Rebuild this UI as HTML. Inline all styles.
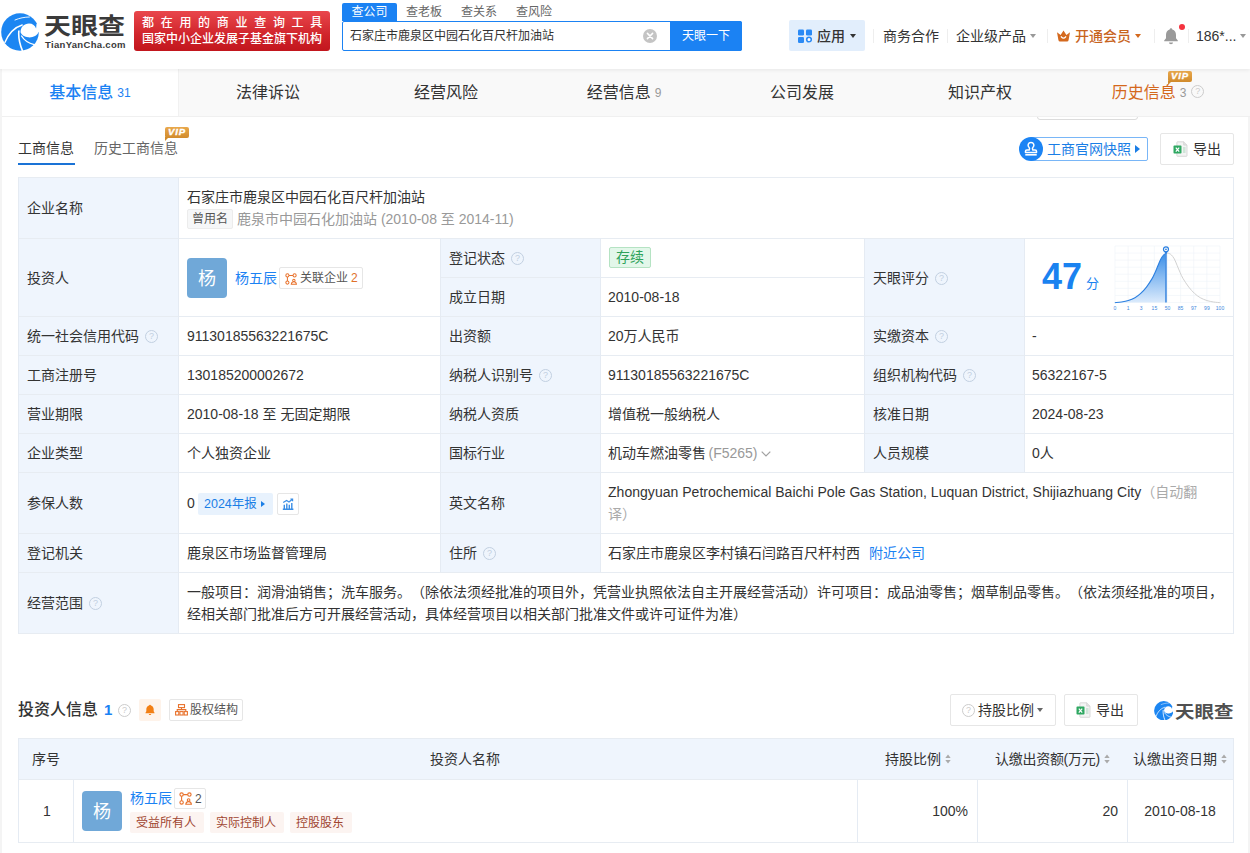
<!DOCTYPE html>
<html lang="zh-CN">
<head>
<meta charset="utf-8">
<title>石家庄市鹿泉区中园石化百尺杆加油站 - 天眼查</title>
<style>
*{box-sizing:border-box;margin:0;padding:0}
html,body{width:1250px;height:853px;overflow:hidden;background:#fff}
body{text-spacing-trim:space-all;font-family:"Liberation Sans","Noto Sans CJK SC",sans-serif;font-size:14px;color:#333;position:relative}
.abs{position:absolute;white-space:nowrap}
a{color:#1b82f3;text-decoration:none}
/* header */
#hdr{position:absolute;left:0;top:0;width:1250px;height:69px;background:#fff;z-index:5;box-shadow:0 1px 4px rgba(0,0,0,.08)}
#pagebg{position:absolute;left:0;top:69px;width:1250px;height:784px;background:#f4f4f4}
#card{position:absolute;left:2px;top:69px;width:1246px;height:784px;background:#fff}
/* nav tabs */
#nav{z-index:2;position:absolute;left:0;top:0;width:1248px;height:48px;background:#f9f9f9;border-bottom:1px solid #f0f0f0}
#nav .t{position:absolute;top:0;height:47px;width:178px;text-align:center;line-height:48px;font-size:16px;color:#333}
#nav .t.on{border-right:1px solid #f1f1f1;background:#fff;color:#1b82f3;font-weight:500}
#nav .t small{font-size:12px;color:#999;font-weight:400;margin-left:4px;position:relative;top:-1px}
#nav .t.on small{color:#1b82f3}

/* header pieces */
#logo-t{left:44px;top:5px;font-size:27px;font-weight:700;color:#3a3a3a;line-height:38px;letter-spacing:0;transform:scaleY(.86);transform-origin:0 100%}
#logo-s{left:45px;top:39px;font-size:9.5px;font-weight:700;color:#3a3a3a;line-height:12px;letter-spacing:.32px}
#banner{font-weight:500;position:absolute;left:134px;top:11px;width:196px;height:40px;border-radius:3px;background:linear-gradient(#e9474c,#d0242b 60%,#c2161d);color:#fff;font-size:12px}
#banner div{position:absolute;left:8px;white-space:nowrap;line-height:16px}
.stab{position:absolute;top:3px;height:18px;line-height:18px;font-size:12px;color:#666;white-space:nowrap}
#sbox{position:absolute;left:342px;top:21px;width:400px;height:30px;border:1px solid #1b82f3;border-radius:2px;background:#fff}
#sbtn{position:absolute;left:670px;top:21px;width:72px;height:30px;background:#1b82f3;color:#fff;font-size:12px;line-height:30px;text-align:center;border-radius:0 2px 2px 0}
.hsep{position:absolute;top:29px;width:1px;height:14px;background:#eeeeee}
.hitem{position:absolute;top:25px;line-height:22px;font-size:14px;color:#333;white-space:nowrap}
.caret{position:absolute;width:0;height:0;border-left:3.5px solid transparent;border-right:3.5px solid transparent;border-top:4px solid #999}

/* sub tabs + buttons */
.q{display:inline-block;width:13px;height:13px;border:1.200px solid #c2d0e1;border-radius:50%;color:#c2d0e1;font-size:9px;line-height:10.500px;text-align:center;vertical-align:middle;margin-left:6px;position:relative;top:-1px;font-family:"Liberation Sans",sans-serif}
.vip{z-index:3;position:absolute;width:24px;height:11px;border-radius:2px;background:linear-gradient(#e9a84c,#d18b2c);color:#fff;font-size:9.500px;font-weight:700;font-style:italic;line-height:10.500px;text-align:center;font-family:"Liberation Sans",sans-serif;letter-spacing:.9px;text-indent:0;-webkit-text-stroke:.35px #fff}
.vip:after{content:"";position:absolute;left:0;top:10px;border-top:4px solid #d18b2c;border-right:4px solid transparent}
.btn{position:absolute;border:1px solid #e6e6e6;border-radius:2px;background:#fff;white-space:nowrap}
/* table 1 */
.lb{position:absolute;background:#eff5fd}
.hl{position:absolute;height:1px;background:#e7ecf2}
.vl{position:absolute;width:1px;background:#e5ebf3}
.c{position:absolute;white-space:nowrap;line-height:20px;font-size:14px;color:#333}
.g{color:#999}
.blue{color:#1b82f3}
.tag{position:absolute;border:1px solid #e6e6e6;border-radius:2px;background:#fff;font-size:12px;line-height:20.500px;height:21px;color:#555;white-space:nowrap}
.ava{position:absolute;width:40px;height:40px;border-radius:4px;background:#70a8d8;color:#fff;font-size:18px;line-height:42px;text-align:center;overflow:hidden}
.rt{position:absolute;height:21px;line-height:22.500px;font-size:12px;color:#a04530;background:#fcf4f1;border-radius:2px;padding:0 6px;white-space:nowrap}
</style>
</head>
<body>
<svg width="0" height="0" style="position:absolute"><defs><g id="xls"><path d="M4.500.8h6.200l3.300 3.300v10.600a.6.600 0 0 1-.6.600H4.500a.6.600 0 0 1-.6-.6V1.400a.6.600 0 0 1 .6-.6z" fill="#f4f4f4" stroke="#cfcfcf" stroke-width=".8"/><path d="M10.700.8v3.300h3.300" fill="#e4e4e4" stroke="#cfcfcf" stroke-width=".7"/><path d="M10 7h2.500M10 9h2.500M10 11h2.500" stroke="#9fd3b4" stroke-width=".9"/><rect x=".5" y="4.600" width="8" height="8" rx=".8" fill="#2fa862"/><path d="M2.800 6.600l3.400 4M6.200 6.600l-3.400 4" stroke="#fff" stroke-width="1.200"/></g><g id="tyc">
    <circle cx="19" cy="19" r="18.8" fill="#1c86f2"/>
    <path d="M19.6 19.6 C19.2 14 23.3 10.4 28 10.4 C31.6 10.4 34.2 12.4 35.1 15.4 L35.5 11 L38 11 L38 19.2 L37.6 19 C36.2 22.8 31.6 24.8 27.2 24.3 C23.6 23.9 20.6 22.3 19.6 19.6Z" fill="#fff"/>
    <path d="M3.9 29.6 C7.6 20.6 12.6 14.6 21.2 12" stroke="#fff" stroke-width="1.4" fill="none" stroke-linecap="round"/>
    <path d="M17.9 17.5 C17.2 24 18.6 31 21.6 38" stroke="#fff" stroke-width="1.6" fill="none"/>
    <path d="M20.6 23 C23.2 27.4 27.6 30.2 33.2 31.6" stroke="#fff" stroke-width="1.4" fill="none" stroke-linecap="round"/>
    <path d="M14 7 C18.6 5 23.4 4.1 28.4 4" stroke="#fff" stroke-width=".9" fill="none" stroke-linecap="round"/>
  </g><g id="rel" fill="none" stroke="#e8722c" stroke-width="1.100"><circle cx="2.600" cy="2.600" r="1.700"/><circle cx="10.400" cy="2.600" r="1.700"/><circle cx="2.600" cy="10.400" r="1.700"/><path d="M4.300 2.600h4.400M2.600 4.300v4.400"/><circle cx="9.600" cy="8" r="1.300"/><path d="M6.800 12.200c.3-2 1.400-2.600 2.800-2.600s2.500.6 2.800 2.600z"/></g></defs></svg>
<div id="pagebg"></div>
<div id="card">
  <div id="nav">
    <div class="t on" style="left:0;width:177px">基本信息<small>31</small></div>
    <div class="t" style="left:177px">法律诉讼</div>
    <div class="t" style="left:355px">经营风险</div>
    <div class="t" style="left:533px">经营信息<small>9</small></div>
    <div class="t" style="left:711px">公司发展</div>
    <div class="t" style="left:889px">知识产权</div>
    <div class="t" style="left:1067px;color:#d4681c">历史信息<small>3</small><span class="q" style="margin-left:5px;border-color:#ccc;color:#ccc;top:-2px">?</span></div>
  </div>

  <!-- hidden fragment under nav -->
  <div class="abs" style="left:1035px;top:40px;width:101px;height:11px;border:1px solid #dcdcdc;border-radius:0 0 3px 3px;background:#fff"></div>
  <div class="vip" style="left:1166px;top:2px">VIP</div>
  <!-- sub tabs -->
  <div class="c" style="left:16px;top:69px;color:#333">工商信息</div>
  <div class="abs" style="left:16px;top:94px;width:57px;height:2px;background:#1a73d6"></div>
  <div class="c" style="left:92px;top:69px;color:#666">历史工商信息</div>
  <div class="vip" style="left:163px;top:58px">VIP</div>
  <!-- buttons -->
  <div class="btn" style="left:1028px;top:68px;width:118px;height:24px;border-color:#79b6f7"></div>
  <svg class="abs" style="left:1017px;top:68px" width="24" height="24" viewBox="0 0 24 24"><circle cx="12" cy="12" r="12" fill="#1c84f4"/><path d="M12 5.400a2.900 2.900 0 0 1 1.900 5.100c-.5.500-.6 1-.4 1.600l.3.900h2.400c.8 0 1.300.5 1.300 1.200v1.300H6.500v-1.300c0-.7.500-1.200 1.300-1.200h2.400l.3-.9c.2-.6.100-1.100-.4-1.600A2.900 2.900 0 0 1 12 5.400z" fill="none" stroke="#fff" stroke-width="1.500" stroke-linejoin="round"/><path d="M6.300 17.800h11.400" stroke="#fff" stroke-width="1.600"/></svg>
  <div class="c" style="left:1045px;top:70px;color:#1a7ee6">工商官网快照</div>
  <div class="abs" style="left:1133px;top:76px;width:0;height:0;border-top:4px solid transparent;border-bottom:4px solid transparent;border-left:5px solid #1a7ee6"></div>
  <div class="btn" style="left:1158px;top:64px;width:74px;height:32px"></div>
  <svg class="abs" style="left:1171px;top:72px" width="15" height="16" viewBox="0 0 15 16"><use href="#xls"/></svg>
  <div class="c" style="left:1191px;top:70px">导出</div>

<!--T1-->
<div class="lb" style="left:16px;top:108px;width:160px;height:456px"></div>
<div class="lb" style="left:438px;top:169px;width:160px;height:334px"></div>
<div class="lb" style="left:862px;top:169px;width:160px;height:234px"></div>
<div class="hl" style="left:16px;top:108px;width:1216px"></div>
<div class="hl" style="left:16px;top:169px;width:1216px"></div>
<div class="hl" style="left:16px;top:247px;width:1216px"></div>
<div class="hl" style="left:16px;top:286px;width:1216px"></div>
<div class="hl" style="left:16px;top:325px;width:1216px"></div>
<div class="hl" style="left:16px;top:364px;width:1216px"></div>
<div class="hl" style="left:16px;top:403px;width:1216px"></div>
<div class="hl" style="left:16px;top:464px;width:1216px"></div>
<div class="hl" style="left:16px;top:503px;width:1216px"></div>
<div class="hl" style="left:16px;top:564px;width:1216px"></div>
<div class="hl" style="left:438px;top:208px;width:424px"></div>
<div class="vl" style="left:16px;top:108px;height:457px"></div>
<div class="vl" style="left:1231px;top:108px;height:457px"></div>
<div class="vl" style="left:176px;top:108px;height:456px"></div>
<div class="vl" style="left:438px;top:169px;height:334px"></div>
<div class="vl" style="left:598px;top:169px;height:334px"></div>
<div class="vl" style="left:862px;top:169px;height:234px"></div>
<div class="vl" style="left:1022px;top:169px;height:234px"></div>
<div class="c " style="left:25px;top:129px;">企业名称</div>
<div class="c " style="left:25px;top:199px;">投资人</div>
<div class="c " style="left:25px;top:257px;">统一社会信用代码<span class="q">?</span></div>
<div class="c " style="left:25px;top:296px;">工商注册号</div>
<div class="c " style="left:25px;top:335px;">营业期限</div>
<div class="c " style="left:25px;top:374px;">企业类型</div>
<div class="c " style="left:25px;top:424px;">参保人数</div>
<div class="c " style="left:25px;top:474px;">登记机关</div>
<div class="c " style="left:25px;top:524px;">经营范围<span class="q">?</span></div>
<div class="c " style="left:447px;top:179px;">登记状态<span class="q">?</span></div>
<div class="c " style="left:447px;top:218px;">成立日期</div>
<div class="c " style="left:447px;top:257px;">出资额</div>
<div class="c " style="left:447px;top:296px;">纳税人识别号<span class="q">?</span></div>
<div class="c " style="left:447px;top:335px;">纳税人资质</div>
<div class="c " style="left:447px;top:374px;">国标行业</div>
<div class="c " style="left:447px;top:424px;">英文名称</div>
<div class="c " style="left:447px;top:474px;">住所<span class="q">?</span></div>
<div class="c " style="left:871px;top:199px;">天眼评分<span class="q">?</span></div>
<div class="c " style="left:871px;top:257px;">实缴资本<span class="q">?</span></div>
<div class="c " style="left:871px;top:296px;">组织机构代码<span class="q">?</span></div>
<div class="c " style="left:871px;top:335px;">核准日期</div>
<div class="c " style="left:871px;top:374px;">人员规模</div>
<div class="c " style="left:185px;top:118px;">石家庄市鹿泉区中园石化百尺杆加油站</div>
<div class="tag" style="left:185px;top:140px;width:46px;height:20px;line-height:18px;text-align:center;background:#f6f7f8;border-color:#ececec;color:#555">曾用名</div>
<div class="c g" style="left:235px;top:140px;">鹿泉市中园石化加油站 (2010-08 至 2014-11)</div>
<div class="ava" style="left:185px;top:189px">杨</div>
<div class="c blue" style="left:233px;top:199px;">杨五辰</div>
<div class="tag" style="left:277px;top:198px;width:84px;height:22px;line-height:20.500px"><svg class="abs" style="left:5px;top:5px" width="12" height="12" viewBox="0 0 13 13"><use href="#rel"/></svg><span style="position:absolute;left:20px">关联企业</span><span style="position:absolute;left:71px;color:#e0702a">2</span></div>
<div class="c " style="left:185px;top:257px;">91130185563221675C</div>
<div class="c " style="left:185px;top:296px;">130185200002672</div>
<div class="c " style="left:185px;top:335px;">2010-08-18 至 无固定期限</div>
<div class="c " style="left:185px;top:374px;">个人独资企业</div>
<div class="c " style="left:185px;top:424px;">0</div>
<div class="abs" style="left:196px;top:424px;width:75px;height:22px;border-radius:2px;background:#e8f2fd;color:#1a7ee6;font-size:12.500px;line-height:22px;padding-left:6px">2024年报<i style="position:absolute;left:63px;top:8px;border-top:3.500px solid transparent;border-bottom:3.500px solid transparent;border-left:4px solid #1a7ee6"></i></div>
<div class="tag" style="left:275px;top:424px;width:22px;height:22px"><svg class="abs" style="left:4px;top:4px" width="12" height="12" viewBox="0 0 12 12"><path d="M.8 11.300h10.600M2.300 11V6.800M4.800 11V5.600M7.300 11V6.800M9.800 11V5" stroke="#3a8ee6" stroke-width="1.400" fill="none"/><path d="M1.200 4.600L4.600 2.400l2.400 1.600L10.400 1.200M8.400 1h2.200v2.200" stroke="#3a8ee6" stroke-width="1.200" fill="none"/></svg></div>
<div class="c " style="left:185px;top:474px;">鹿泉区市场监督管理局</div>
<div class="abs" style="left:607px;top:178px;width:42px;height:21px;border:1px solid #b5e3c3;border-radius:2px;background:#e3f7ea;color:#2fa35b;font-size:14px;line-height:19px;text-align:center">存续</div>
<div class="c " style="left:606px;top:218px;">2010-08-18</div>
<div class="c " style="left:606px;top:257px;">20万人民币</div>
<div class="c " style="left:606px;top:296px;">91130185563221675C</div>
<div class="c " style="left:606px;top:335px;">增值税一般纳税人</div>
<div class="c " style="left:606px;top:374px;">机动车燃油零售<span class="g" style="margin-left:2.500px">(F5265)</span><svg style="margin-left:3.500px;vertical-align:1px" width="10" height="6" viewBox="0 0 10 6"><path d="M.7.700L5 5 9.300.7" stroke="#a0a0a0" stroke-width="1.200" fill="none"/></svg></div>
<div class="c " style="left:606px;top:413px;"><span style="letter-spacing:.03px">Zhongyuan Petrochemical Baichi Pole Gas Station, Luquan District, Shijiazhuang City</span><span style="color:#aaa">（自动翻</span></div>
<div class="c " style="left:606px;top:435px;"><span style="color:#aaa">译）</span></div>
<div class="c " style="left:606px;top:474px;">石家庄市鹿泉区李村镇石闫路百尺杆村西<span class="blue" style="margin-left:9px">附近公司</span></div>
<div class="c " style="left:1030px;top:257px;">-</div>
<div class="c " style="left:1030px;top:296px;">56322167-5</div>
<div class="c " style="left:1030px;top:335px;">2024-08-23</div>
<div class="c " style="left:1030px;top:374px;">0人</div>
<div class="c " style="left:185px;top:513px;">一般项目：润滑油销售；洗车服务。（除依法须经批准的项目外，凭营业执照依法自主开展经营活动）许可项目：成品油零售；烟草制品零售。（依法须经批准的项目，</div>
<div class="c " style="left:185px;top:535px;">经相关部门批准后方可开展经营活动，具体经营项目以相关部门批准文件或许可证件为准）</div>
<div class="abs" style="left:1040px;top:188px;font-size:36px;font-weight:700;color:#1a82f0;line-height:40px;font-family:'Liberation Sans',sans-serif">47</div>
<div class="abs" style="left:1084px;top:206px;font-size:13px;color:#1a82f0;line-height:18px">分</div>

<!--/T1-->
<!--T2-->
<svg class="abs" style="left:1108px;top:171px" width="130" height="76" viewBox="0 0 130 76"><defs><linearGradient id="cg" x1="0" y1="0" x2="0" y2="1"><stop offset="0" stop-color="#3b8fe8"/><stop offset="1" stop-color="#dcebfc"/></linearGradient></defs><path d="M5.00 6V62.5M18.12 6V62.5M31.25 6V62.5M44.38 6V62.5M57.50 6V62.5M70.62 6V62.5M83.75 6V62.5M96.88 6V62.5M110.00 6V62.5M5 6.00H110M5 13.06H110M5 20.12H110M5 27.19H110M5 34.25H110M5 41.31H110M5 48.38H110M5 55.44H110M5 62.50H110" stroke="#eff3f9" stroke-width=".6" fill="none"/><path d="M4.80 62.69 C5.92 62.57 9.28 62.37 11.52 62.01 C13.76 61.66 16.00 61.29 18.24 60.57 C20.48 59.85 22.88 58.89 24.96 57.69 C27.04 56.49 28.80 55.15 30.72 53.37 C32.64 51.60 34.56 49.53 36.48 47.04 C38.40 44.54 40.80 40.83 42.24 38.40 C43.68 35.97 44.16 34.59 45.12 32.45 C46.08 30.30 47.04 27.79 48.00 25.54 C48.96 23.28 49.92 20.67 50.88 18.91 C51.84 17.15 52.91 15.87 53.76 14.98 C54.61 14.08 55.33 13.82 55.97 13.54 L55.97 62.5 L5 62.5Z" fill="url(#cg)"/><path d="M55.97 13.54 C56.61 13.25 57.05 13.25 57.60 13.25 C58.14 13.25 58.59 13.25 59.23 13.54 C59.87 13.82 60.59 14.08 61.44 14.98 C62.29 15.87 63.36 17.15 64.32 18.91 C65.28 20.67 66.24 23.28 67.20 25.54 C68.16 27.79 69.12 30.30 70.08 32.45 C71.04 34.59 71.52 35.97 72.96 38.40 C74.40 40.83 76.80 44.54 78.72 47.04 C80.64 49.53 82.56 51.60 84.48 53.37 C86.40 55.15 88.16 56.49 90.24 57.69 C92.32 58.89 94.72 59.85 96.96 60.57 C99.20 61.29 101.44 61.66 103.68 62.01 C105.92 62.37 109.28 62.57 110.40 62.69" stroke="#d2d2d2" stroke-width="1" fill="none"/><path d="M4.80 62.69 C5.92 62.57 9.28 62.37 11.52 62.01 C13.76 61.66 16.00 61.29 18.24 60.57 C20.48 59.85 22.88 58.89 24.96 57.69 C27.04 56.49 28.80 55.15 30.72 53.37 C32.64 51.60 34.56 49.53 36.48 47.04 C38.40 44.54 40.80 40.83 42.24 38.40 C43.68 35.97 44.16 34.59 45.12 32.45 C46.08 30.30 47.04 27.79 48.00 25.54 C48.96 23.28 49.92 20.67 50.88 18.91 C51.84 17.15 52.91 15.87 53.76 14.98 C54.61 14.08 55.33 13.82 55.97 13.54" stroke="#2b7fe0" stroke-width="1.100" fill="none"/><path d="M55.97 11.5V62.5" stroke="#4a90e2" stroke-width="1.700"/><path d="M53.97 11.0L55.97 14.2L57.97 11.0Z" fill="#2b7fe0"/><circle cx="55.97" cy="9.3" r="2.500" fill="#fff" stroke="#2b7fe0" stroke-width="1.200"/><circle cx="55.97" cy="9.3" r=".9" fill="#2b7fe0"/><text x="5.0" y="70.1" font-size="5" fill="#3d86dc" text-anchor="middle" font-family="Liberation Sans,sans-serif">0</text><text x="18.1" y="70.1" font-size="5" fill="#3d86dc" text-anchor="middle" font-family="Liberation Sans,sans-serif">1</text><text x="31.2" y="70.1" font-size="5" fill="#3d86dc" text-anchor="middle" font-family="Liberation Sans,sans-serif">3</text><text x="44.4" y="70.1" font-size="5" fill="#3d86dc" text-anchor="middle" font-family="Liberation Sans,sans-serif">15</text><text x="57.5" y="70.1" font-size="5" fill="#3d86dc" text-anchor="middle" font-family="Liberation Sans,sans-serif">50</text><text x="70.6" y="70.1" font-size="5" fill="#3d86dc" text-anchor="middle" font-family="Liberation Sans,sans-serif">85</text><text x="83.8" y="70.1" font-size="5" fill="#3d86dc" text-anchor="middle" font-family="Liberation Sans,sans-serif">97</text><text x="96.9" y="70.1" font-size="5" fill="#3d86dc" text-anchor="middle" font-family="Liberation Sans,sans-serif">99</text><text x="110.0" y="70.1" font-size="5" fill="#3d86dc" text-anchor="middle" font-family="Liberation Sans,sans-serif">100</text></svg>
<div class="abs" style="left:16px;top:629px;font-size:16px;font-weight:500;line-height:24px;color:#333">投资人信息<span style="color:#1b82f3;margin-left:6px;font-size:15px;font-weight:700;font-family:'Liberation Sans',sans-serif">1</span></div>
<span class="q" style="position:absolute;left:116px;top:635px;margin:0;border-color:#ccc;color:#ccc">?</span>
<div class="abs" style="left:137px;top:630px;width:22px;height:22px;border-radius:2px;background:#fef3ea"><svg class="abs" style="left:6px;top:5px" width="10" height="12" viewBox="0 0 12 14"><path d="M6 .6c.7 0 1.100.4 1.100 1 2.200.6 3.300 2.400 3.300 4.600v2.400l1 1.600v.8H.6v-.8l1-1.600V6.200c0-2.200 1.100-4 3.300-4.600 0-.6.400-1 1.100-1z" fill="#f27f14"/><path d="M4.600 11.800h2.800c0 .8-.6 1.300-1.400 1.300s-1.400-.5-1.400-1.300z" fill="#f27f14"/></svg></div>
<div class="tag" style="left:167px;top:630px;width:74px;height:22px;line-height:20px"><svg class="abs" style="left:5px;top:4px" width="13" height="12" viewBox="0 0 13 12"><g fill="none" stroke="#e8722c" stroke-width="1.100"><rect x="3.500" y=".6" width="6" height="3"/><path d="M6.500 3.600v2M2.200 7.600v-2h8.600v2"/><rect x=".6" y="7.600" width="3.200" height="3.400"/><rect x="4.900" y="7.600" width="3.200" height="3.400"/><rect x="9.200" y="7.600" width="3.200" height="3.400"/></g></svg><span style="position:absolute;left:20px">股权结构</span></div>
<div class="btn" style="left:948px;top:625px;width:106px;height:32px"></div>
<span class="q" style="position:absolute;left:960px;top:635px;margin:0;border-color:#ccc;color:#ccc">?</span>
<div class="c" style="left:976px;top:631px">持股比例</div>
<div class="caret" style="left:1035px;top:639px;border-top-color:#666"></div>
<div class="btn" style="left:1062px;top:625px;width:74px;height:32px"></div>
<svg class="abs" style="left:1074px;top:633px" width="15" height="16" viewBox="0 0 15 16"><use href="#xls"/></svg>
<div class="c" style="left:1094px;top:631px">导出</div>
<svg class="abs" style="left:1151.5px;top:631.5px" width="19.500" height="19.500" viewBox="0 0 38 38"><use href="#tyc"/></svg>
<div class="abs" style="left:1173px;top:626.5px;font-size:19.500px;font-weight:700;color:#505050;line-height:28px;transform:scaleY(.86);transform-origin:0 100%">天眼查</div>
<div class="lb" style="left:16px;top:669px;width:1216px;height:41px"></div>
<div class="hl" style="left:16px;top:669px;width:1216px"></div>
<div class="hl" style="left:16px;top:710px;width:1216px"></div>
<div class="hl" style="left:16px;top:773px;width:1216px"></div>
<div class="vl" style="left:16px;top:669px;height:105px"></div>
<div class="vl" style="left:1231px;top:669px;height:105px"></div>
<div class="vl" style="left:71px;top:711px;height:62px"></div>
<div class="vl" style="left:855px;top:711px;height:62px"></div>
<div class="vl" style="left:975px;top:711px;height:62px"></div>
<div class="vl" style="left:1125px;top:711px;height:62px"></div>
<div class="c" style="left:30px;top:680px;">序号</div>
<div class="c" style="left:71px;top:680px;width:784px;text-align:center">投资人名称</div>
<div class="c" style="left:883px;top:680px;">持股比例<svg style="margin-left:4px;vertical-align:0" width="6" height="10" viewBox="0 0 6 10"><path d="M3 .5L5.700 4H.3zM3 9.500L5.700 6H.3z" fill="#aaa"/></svg></div>
<div class="c" style="left:993px;top:680px;letter-spacing:-.28px">认缴出资额(万元)<svg style="margin-left:4px;vertical-align:0" width="6" height="10" viewBox="0 0 6 10"><path d="M3 .5L5.700 4H.3zM3 9.500L5.700 6H.3z" fill="#aaa"/></svg></div>
<div class="c" style="left:1131px;top:680px;">认缴出资日期<svg style="margin-left:4px;vertical-align:0" width="6" height="10" viewBox="0 0 6 10"><path d="M3 .5L5.700 4H.3zM3 9.500L5.700 6H.3z" fill="#aaa"/></svg></div>
<div class="c" style="left:41px;top:732px;">1</div>
<div class="ava" style="left:80px;top:722px">杨</div>
<div class="c" style="left:128px;top:719px;"><span class="blue">杨五辰</span></div>
<div class="tag" style="left:172px;top:719px;width:32px"><svg class="abs" style="left:4px;top:3px" width="13" height="13" viewBox="0 0 13 13"><use href="#rel"/></svg><span style="position:absolute;left:20px">2</span></div>
<div class="rt" style="left:128px;top:743px;width:74px">受益所有人</div>
<div class="rt" style="left:208px;top:743px;width:74px">实际控制人</div>
<div class="rt" style="left:288px;top:743px;width:62px">控股股东</div>
<div class="c" style="left:855px;top:732px;width:111px;text-align:right">100%</div>
<div class="c" style="left:975px;top:732px;width:141px;text-align:right">20</div>
<div class="c" style="left:1125px;top:732px;width:106px;text-align:center">2010-08-18</div>

<!--/T2-->
</div>
<div id="hdr">
  <svg class="abs" style="left:1px;top:12.5px" width="38" height="38" viewBox="0 0 38 38"><use href="#tyc"/></svg>
  <div class="abs" id="logo-t">天眼查</div>
  <div class="abs" id="logo-s">TianYanCha.com</div>
  <div id="banner">
    <div style="top:4px;letter-spacing:6.7px">都在用的商业查询工具</div>
    <div style="top:20px">国家中小企业发展子基金旗下机构</div>
  </div>
  <div class="stab" style="left:342px;width:55px;text-align:center;background:#1b82f3;color:#fff;border-radius:2px 2px 0 0">查公司</div>
  <div class="stab" style="left:406px">查老板</div>
  <div class="stab" style="left:461px">查关系</div>
  <div class="stab" style="left:516px">查风险</div>
  <div id="sbox"><div class="abs" style="left:7px;top:0;line-height:28px;font-size:12px;color:#333">石家庄市鹿泉区中园石化百尺杆加油站</div>
    <svg class="abs" style="left:300px;top:7px" width="14" height="14" viewBox="0 0 14 14"><circle cx="7" cy="7" r="7" fill="#c4c4c4"/><path d="M4.4 4.4L9.6 9.6M9.6 4.4L4.4 9.6" stroke="#fff" stroke-width="1.5" stroke-linecap="round"/></svg>
  </div>
  <div id="sbtn">天眼一下</div>

  <div class="abs" style="left:789px;top:20px;width:76px;height:31px;background:#e2eefc;border-radius:2px"></div>
  <svg class="abs" style="left:798px;top:29px" width="14" height="14" viewBox="0 0 14 14"><rect x="0" y="0.5" width="6" height="6" rx="1.3" fill="#2b8af5"/><rect x="8" y="0.5" width="6" height="6" rx="1.3" fill="#2b8af5"/><rect x="0" y="8" width="6" height="6" rx="1.3" fill="#2b8af5"/><circle cx="11" cy="10.5" r="2.3" fill="#fff" stroke="#2b8af5" stroke-width="1.6"/></svg>
  <div class="hitem" style="left:817px;font-weight:500">应用</div>
  <div class="caret" style="left:850px;top:34px;border-top-color:#333"></div>
  <div class="hsep" style="left:873px"></div>
  <div class="hitem" style="left:883px">商务合作</div>
  <div class="hsep" style="left:947px"></div>
  <div class="hitem" style="left:956px">企业级产品</div>
  <div class="caret" style="left:1030px;top:34px"></div>
  <div class="hsep" style="left:1047px"></div>
  <svg class="abs" style="left:1056px;top:29px" width="15" height="14" viewBox="0 0 15 14"><path d="M1 3.2 L4.6 6 L7.5 1.5 L10.4 6 L14 3.2 L12.6 11 Q12.4 12.5 11 12.5 H4 Q2.6 12.5 2.4 11 Z" fill="#d4691e"/><path d="M5.3 7.8 Q7.5 10.6 9.7 7.8" stroke="#fff" stroke-width="1.3" fill="none" stroke-linecap="round"/></svg>
  <div class="hitem" style="left:1075px;font-weight:500;color:#c8641e">开通会员</div>
  <div class="caret" style="left:1135px;top:34px;border-top-color:#d4691e"></div>
  <div class="hsep" style="left:1154px"></div>
  <svg class="abs" style="left:1163px;top:27px" width="16" height="18" viewBox="0 0 16 18"><path d="M8 1.2 C8.8 1.2 9.3 1.8 9.3 2.5 C11.8 3.2 13 5.3 13 8 V11.2 L14.8 13.6 V14.3 H1.2 V13.6 L3 11.2 V8 C3 5.3 4.2 3.2 6.7 2.5 C6.7 1.8 7.2 1.2 8 1.2Z" fill="#9a9a9a"/><path d="M6 15.5 H10 C10 16.6 9.1 17.2 8 17.2 C6.9 17.2 6 16.6 6 15.5Z" fill="#9a9a9a"/></svg>
  <div class="abs" style="left:1179px;top:24px;width:6px;height:6px;border-radius:3px;background:#f5333f"></div>
  <div class="hsep" style="left:1188px"></div>
  <div class="hitem" style="left:1196px">186*...</div>
  <div class="caret" style="left:1240px;top:34px"></div>
</div>
</body>
</html>
